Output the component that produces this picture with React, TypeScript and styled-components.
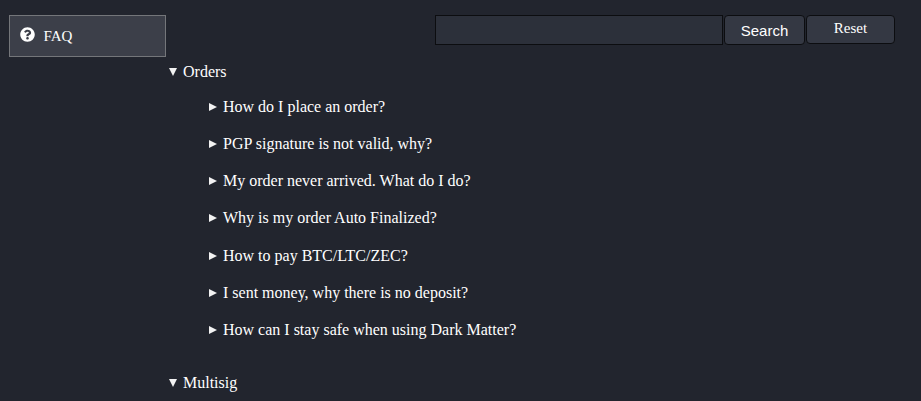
import React from 'react';
import styled, { createGlobalStyle } from 'styled-components';
import { FaQuestionCircle } from 'react-icons/fa';

const orders = [
  'How do I place an order?',
  'PGP signature is not valid, why?',
  'My order never arrived. What do I do?',
  'Why is my order Auto Finalized?',
  'How to pay BTC/LTC/ZEC?',
  'I sent money, why there is no deposit?',
  'How can I stay safe when using Dark Matter?',
];

const GlobalStyle = createGlobalStyle`
  html, body {
    margin: 0;
    height: 100%;
    overflow: hidden;
    background: #22252e;
    color: #fff;
    font-family: "Liberation Serif", "Times New Roman", serif;
    font-size: 16px;
  }
`;

const Page = styled.div`
  display: flex;
  align-items: flex-start;
`;

const Sidebar = styled.nav`
  width: 157px;
  flex: none;
  margin: 15px 3px 0 9px;
`;

const SideLink = styled.a`
  display: flex;
  align-items: center;
  gap: 8.5px;
  box-sizing: border-box;
  height: 42px;
  padding: 0 10px;
  color: #fff;
  background: #3c3f49;
  border: 1px solid #74767a;
  font-size: 15px;
`;

const SideIcon = styled(FaQuestionCircle)`
  width: 15px;
  height: 15px;
  margin-top: -3px;
`;

const Main = styled.main`
  flex: 1;
  min-width: 0;
`;

const SearchForm = styled.form`
  display: flex;
  align-items: flex-start;
  justify-content: flex-end;
  gap: 1px;
  margin: 15px 26px 0 0;
`;

const SearchInput = styled.input`
  box-sizing: border-box;
  width: 288px;
  height: 30px;
  margin: 0;
  padding: 0 6px;
  color: #fff;
  background: #2c303a;
  border: 1px solid #0c0d10;
  outline: none;
`;

const SubmitButton = styled.button<{ $wide?: boolean; $serif?: boolean }>`
  box-sizing: border-box;
  width: ${(p) => (p.$wide ? '89px' : '81px')};
  height: ${(p) => (p.$serif ? '29px' : '30px')};
  margin: 0;
  padding: ${(p) => (p.$serif ? '0 0 3px' : '1px 0 0')};
  color: #fff;
  background: #343843;
  border: 1px solid #0c0d10;
  border-radius: 4px;
  font-family: ${(p) => (p.$serif ? '"Liberation Serif", serif' : '"Liberation Sans", Arial, sans-serif')};
  font-size: 15px;
`;

const Section = styled.details`
  margin-top: 18px;

  & + & {
    margin-top: 35px;
  }
`;

const SectionTitle = styled.summary`
  display: flex;
  align-items: center;
  gap: 6px;
  line-height: 18px;
  list-style: none;
  cursor: pointer;

  &::before {
    content: '';
    width: 0;
    height: 0;
    border-style: solid;
    border-width: 8px 4px 0;
    border-color: #f2f2f2 transparent transparent;
  }
`;

const Question = styled.details`
  margin: 19.17px 0 0 40px;

  &:first-of-type {
    margin-top: 17px;
  }
`;

const QuestionTitle = styled.summary`
  display: flex;
  align-items: center;
  gap: 6px;
  line-height: 18px;
  list-style: none;
  cursor: pointer;

  &::before {
    content: '';
    width: 0;
    height: 0;
    border-style: solid;
    border-width: 4px 0 4px 8px;
    border-color: transparent transparent transparent #f2f2f2;
  }
`;

export default function App() {
  return (
    <>
      <GlobalStyle />
      <Page>
        <Sidebar>
          <SideLink>
            <SideIcon />
            FAQ
          </SideLink>
        </Sidebar>
        <Main>
          <SearchForm onSubmit={(e) => e.preventDefault()}>
            <SearchInput type="text" />
            <SubmitButton type="submit">Search</SubmitButton>
            <SubmitButton type="reset" $wide $serif>
              Reset
            </SubmitButton>
          </SearchForm>
          <Section open>
            <SectionTitle>Orders</SectionTitle>
            {orders.map((q) => (
              <Question key={q}>
                <QuestionTitle>{q}</QuestionTitle>
              </Question>
            ))}
          </Section>
          <Section open>
            <SectionTitle>Multisig</SectionTitle>
          </Section>
        </Main>
      </Page>
    </>
  );
}
